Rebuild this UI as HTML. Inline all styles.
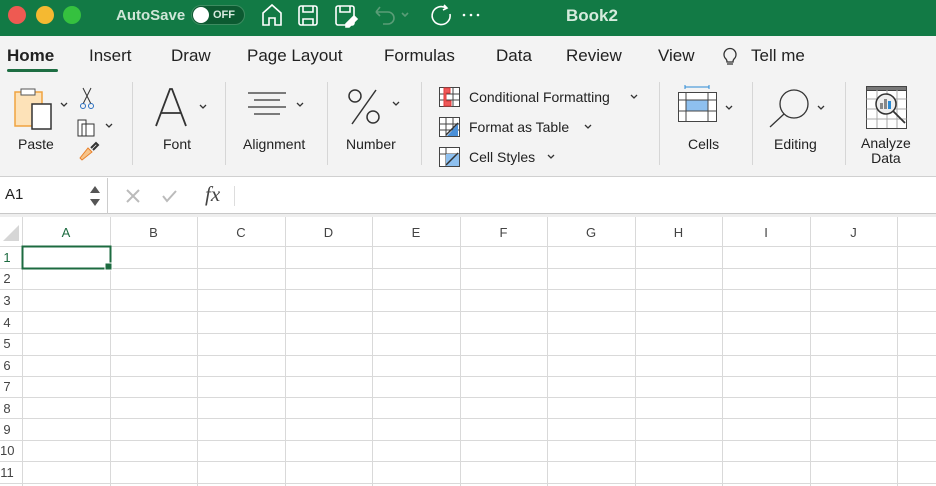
<!DOCTYPE html>
<html><head><meta charset="utf-8"><style>
*{margin:0;padding:0;box-sizing:border-box}
body{width:936px;height:486px;overflow:hidden;background:#fff;font-family:"Liberation Sans",sans-serif;position:relative;color:#222}
.a{position:absolute;white-space:nowrap}
.tb{position:absolute;left:0;top:0;width:936px;height:36px;background:#127a45}
.rib{position:absolute;left:0;top:36px;width:936px;height:141px;background:#f3f3f3;border-bottom:1px solid #d0d0d0}
.tab{font-size:17px;top:46px;color:#222}
.lbl{font-size:14px;color:#222}
.sep{position:absolute;top:82px;width:1px;height:83px;background:#d6d6d6}
.ch{font-size:13px;color:#444;top:225px;text-align:center}
.rh{font-size:13px;color:#444;left:0;width:14px;text-align:center}
</style></head><body>
<div class="tb"></div>
<div class="a" style="left:8px;top:6px;width:18px;height:18px;border-radius:50%;background:#ee5a52"></div>
<div class="a" style="left:36px;top:6px;width:18px;height:18px;border-radius:50%;background:#f5b931"></div>
<div class="a" style="left:63px;top:6px;width:18px;height:18px;border-radius:50%;background:#35c13f"></div>
<div class="a" style="left:116px;top:7px;font-size:15px;font-weight:bold;color:#cfe6d8">AutoSave</div>
<div class="a" style="left:191px;top:5px;width:54px;height:20px;border-radius:10px;background:#0c5a31;border:1px solid #3d8b60"></div>
<div class="a" style="left:193px;top:7px;width:16px;height:16px;border-radius:50%;background:#fff"></div>
<div class="a" style="left:213px;top:9px;font-size:11px;font-weight:bold;color:#d8eadf">OFF</div>
<svg class="a" style="left:258px;top:0" width="230" height="32" fill="none" stroke="#fff" stroke-width="1.6">
<path d="M5 25V13l9-8 9 8v12h-6v-7h-6v7z"/>
<rect x="41" y="6" width="18" height="19" rx="2"/><path d="M45 6v6h10V6M45 25v-6h10v6"/>
<rect x="78" y="6" width="18" height="19" rx="2"/><path d="M82 6v6h10V6"/><path d="M88 24l8-8 3 3-8 8h-3z" fill="#fff"/>
<path stroke="#5a9d77" d="M118 12h12a6 6 0 010 12h-5M118 12l4-5M118 12l4 4"/><path stroke="#5a9d77" d="M144 13l3 3 3-3" />
<path d="M188 8a9 9 0 10 4 6M186 5l3 3-4 2"/>
<circle cx="206" cy="15" r="1.3" fill="#fff" stroke="none"/><circle cx="213" cy="15" r="1.3" fill="#fff" stroke="none"/><circle cx="220" cy="15" r="1.3" fill="#fff" stroke="none"/>
</svg>
<div class="a" style="left:566px;top:6px;font-size:17px;font-weight:bold;color:#d5ebdd">Book2</div>

<div class="rib"></div>
<div class="a tab" style="left:7px;font-weight:bold">Home</div>
<div class="a" style="left:7px;top:69px;width:51px;height:3px;border-radius:2px;background:#1e6e43"></div>
<div class="a tab" style="left:89px">Insert</div>
<div class="a tab" style="left:171px">Draw</div>
<div class="a tab" style="left:247px">Page Layout</div>
<div class="a tab" style="left:384px">Formulas</div>
<div class="a tab" style="left:496px">Data</div>
<div class="a tab" style="left:566px">Review</div>
<div class="a tab" style="left:658px">View</div>
<svg class="a" style="left:721px;top:44px" width="18" height="24" fill="none" stroke="#333" stroke-width="1.3"><path d="M5 15a6 6 0 118 0c-1 1-1 2-1 3H6c0-1 0-2-1-3zM6 20h6"/></svg>
<div class="a tab" style="left:751px">Tell me</div>

<!-- paste -->
<svg class="a" style="left:12px;top:86px" width="104" height="80" fill="none">
<rect x="3" y="6" width="27" height="34" fill="#fde2b8" stroke="#f0a340" stroke-width="1.5"/>
<rect x="9" y="3" width="14" height="6" fill="#fff" stroke="#555"/>
<rect x="20" y="18" width="19" height="25" fill="#fff" stroke="#333" stroke-width="1.5"/>
<path d="M49 17l3 3 3-3" stroke="#333" stroke-width="1.3"/>
<path d="M71 2l8 16M79 2l-8 16" stroke="#333"/><circle cx="71" cy="20" r="2.5" stroke="#2a6fc0"/><circle cx="79" cy="20" r="2.5" stroke="#2a6fc0"/>
<path d="M66 34h8v16h-8z M70 38h12v12H70z" stroke="#333" fill="#fff"/>
<path d="M94 38l3 3 3-3" stroke="#333" stroke-width="1.3"/>
<path d="M68 72l8-10 4 4-10 8z" fill="#f7c48a" stroke="#e8802a"/><path d="M79 62l5-5 2 2-5 5" stroke="#333" stroke-width="2"/>
</svg>
<div class="a lbl" style="left:18px;top:136px">Paste</div>
<div class="sep" style="left:132px"></div>
<svg class="a" style="left:150px;top:86px" width="62" height="44" fill="none" stroke="#333" stroke-width="1.8"><path d="M6 40L20 3h2l14 37M11 27h20"/><path d="M50 19l3 3 3-3" stroke-width="1.3"/></svg>
<div class="a lbl" style="left:163px;top:136px">Font</div>
<div class="sep" style="left:225px"></div>
<svg class="a" style="left:246px;top:90px" width="60" height="30" stroke="#333" stroke-width="1.3"><path d="M2 3h38M8 10h26M2 17h38M8 24h26"/><path fill="none" d="M51 13l3 3 3-3"/></svg>
<div class="a lbl" style="left:243px;top:136px">Alignment</div>
<div class="sep" style="left:327px"></div>
<svg class="a" style="left:344px;top:88px" width="64" height="40" fill="none" stroke="#333" stroke-width="1.5"><ellipse cx="11" cy="8" rx="6" ry="6"/><ellipse cx="29" cy="29" rx="6" ry="6"/><path d="M32 2L8 36"/><path d="M49 14l3 3 3-3" stroke-width="1.3"/></svg>
<div class="a lbl" style="left:346px;top:136px">Number</div>
<div class="sep" style="left:421px"></div>
<svg class="a" style="left:438px;top:86px" width="24" height="82" fill="none" stroke="#444">
<rect x="1.5" y="1.5" width="20" height="19" fill="#fff"/><path d="M1.5 8h20M1.5 14h20M8 1.5v19M15 1.5v19"/><path d="M6 2h6v5H8v8h5v5H6z" fill="#ee5a5a" stroke="#e03a3a"/>
<rect x="1.5" y="31.5" width="20" height="19" fill="#fff"/><path d="M1.5 38h20M1.5 44h20M8 31.5v19M15 31.5v19"/><path d="M9 50l11-12v12z" fill="#4a90d9" stroke="none"/><path d="M8 49l12-12" stroke="#333" stroke-width="1.5"/>
<rect x="1.5" y="61.5" width="20" height="19" fill="#fff"/><path d="M1.5 68h20M8 61.5v19"/><rect x="8" y="68" width="13" height="12" fill="#8ec0ef" stroke="none"/><path d="M8 79l12-12" stroke="#333" stroke-width="1.5"/>
</svg>
<div class="a lbl" style="left:469px;top:89px">Conditional Formatting</div>
<div class="a lbl" style="left:469px;top:119px">Format as Table</div>
<div class="a lbl" style="left:469px;top:149px">Cell Styles</div>
<svg class="a" style="left:628px;top:92px" width="14" height="70" fill="none" stroke="#333" stroke-width="1.3"><path d="M3 3l3 3 3-3"/></svg>
<svg class="a" style="left:582px;top:122px" width="14" height="40" fill="none" stroke="#333" stroke-width="1.3"><path d="M3 3l3 3 3-3"/></svg>
<svg class="a" style="left:545px;top:152px" width="14" height="10" fill="none" stroke="#333" stroke-width="1.3"><path d="M3 3l3 3 3-3"/></svg>
<div class="sep" style="left:659px"></div>
<svg class="a" style="left:676px;top:84px" width="64" height="40" fill="none" stroke="#444"><path d="M9 3h24M9 1v4M33 1v4" stroke="#2a8ad4"/>
<rect x="2.5" y="8.5" width="38" height="29" fill="#fff"/><rect x="10" y="16" width="22" height="11" fill="#8ec0ef" stroke="#2a7ac4"/><path d="M2.5 16h38M2.5 27h38M10 8.5v29M32 8.5v29"/><path d="M50 22l3 3 3-3" stroke="#333" stroke-width="1.3"/></svg>
<div class="a lbl" style="left:688px;top:136px">Cells</div>
<div class="sep" style="left:752px"></div>
<svg class="a" style="left:766px;top:86px" width="70" height="44" fill="none" stroke="#333" stroke-width="1.3"><circle cx="28" cy="18" r="14"/><path d="M18 28L4 41"/><path d="M52 20l3 3 3-3"/></svg>
<div class="a lbl" style="left:774px;top:136px">Editing</div>
<div class="sep" style="left:845px"></div>
<svg class="a" style="left:865px;top:85px" width="46" height="46" fill="none" stroke="#444"><rect x="1.5" y="1.5" width="40" height="42" fill="#fff"/><rect x="1.5" y="1.5" width="40" height="4" fill="#777"/><path d="M1.5 14h40M1.5 24h40M1.5 34h40M12 5v38M22 5v38M32 5v38" stroke="#aaa"/><circle cx="21" cy="19" r="10" fill="#eee" stroke="#333" stroke-width="1.5"/><rect x="15" y="18" width="3" height="6" fill="#888" stroke="none"/><rect x="19" y="14" width="3" height="10" fill="#888" stroke="none"/><rect x="23" y="16" width="3" height="8" fill="#2a8ad4" stroke="none"/><path d="M28 26l12 12" stroke="#333" stroke-width="1.8"/></svg>
<div class="a lbl" style="left:861px;top:136px;text-align:center;line-height:15px">Analyze<br>Data</div>

<!-- formula bar -->
<div class="a" style="left:0;top:178px;width:936px;height:36px;background:#fff;border-bottom:1px solid #c8c8c8"></div>
<div class="a" style="left:0;top:214px;width:936px;height:3px;background:#eee"></div>
<div class="a" style="left:5px;top:186px;font-size:15px">A1</div>
<svg class="a" style="left:89px;top:183px" width="12" height="26" fill="#555"><path d="M1 10l5-7 5 7zM1 16l5 7 5-7z"/></svg>
<div class="a" style="left:107px;top:178px;width:1px;height:36px;background:#ccc"></div>
<svg class="a" style="left:125px;top:187px" width="60" height="18" fill="none" stroke="#bbb" stroke-width="2"><path d="M2 3l12 12M14 3L2 15M38 9l4 5 9-10"/></svg>
<div class="a" style="left:205px;top:182px;font-size:21px;font-style:italic;font-family:'Liberation Serif',serif;color:#444">fx</div>
<div class="a" style="left:234px;top:186px;width:1px;height:20px;background:#ddd"></div>

<!-- grid -->
<svg class="a" style="left:0;top:217px" width="936" height="269">
<rect x="0" y="0" width="936" height="29" fill="#fff"/>
<path d="M3 24L19 8v16z" fill="#d6d6d6"/>
<g stroke="#d9d9d9" stroke-width="1">
<path d="M22.5 0v269M110.5 0v269M197.5 0v269M285.5 0v269M372.5 0v269M460.5 0v269M547.5 0v269M635.5 0v269M722.5 0v269M810.5 0v269M897.5 0v269"/>
<path d="M0 29.5h936M0 51.5h936M0 72.5h936M0 94.5h936M0 116.5h936M0 138.5h936M0 159.5h936M0 180.5h936M0 201.5h936M0 223.5h936M0 244.5h936M0 266.5h936"/>
</g>
<rect x="22.5" y="29.5" width="88" height="22" fill="none" stroke="#1d6b40" stroke-width="2"/>
<rect x="105" y="46" width="7" height="7" fill="#1d6b40" stroke="#fff" stroke-width="1"/>
</svg>
<div class="a ch" style="left:22px;width:88px;color:#1d6b40">A</div>
<div class="a ch" style="left:110px;width:87px">B</div>
<div class="a ch" style="left:197px;width:88px">C</div>
<div class="a ch" style="left:285px;width:87px">D</div>
<div class="a ch" style="left:372px;width:88px">E</div>
<div class="a ch" style="left:460px;width:87px">F</div>
<div class="a ch" style="left:547px;width:88px">G</div>
<div class="a ch" style="left:635px;width:87px">H</div>
<div class="a ch" style="left:722px;width:88px">I</div>
<div class="a ch" style="left:810px;width:87px">J</div>
<div class="a rh" style="top:250px;color:#1d6b40">1</div>
<div class="a rh" style="top:271px">2</div>
<div class="a rh" style="top:293px">3</div>
<div class="a rh" style="top:315px">4</div>
<div class="a rh" style="top:336px">5</div>
<div class="a rh" style="top:358px">6</div>
<div class="a rh" style="top:379px">7</div>
<div class="a rh" style="top:401px">8</div>
<div class="a rh" style="top:422px">9</div>
<div class="a rh" style="top:443px">10</div>
<div class="a rh" style="top:465px">11</div>
</body></html>
